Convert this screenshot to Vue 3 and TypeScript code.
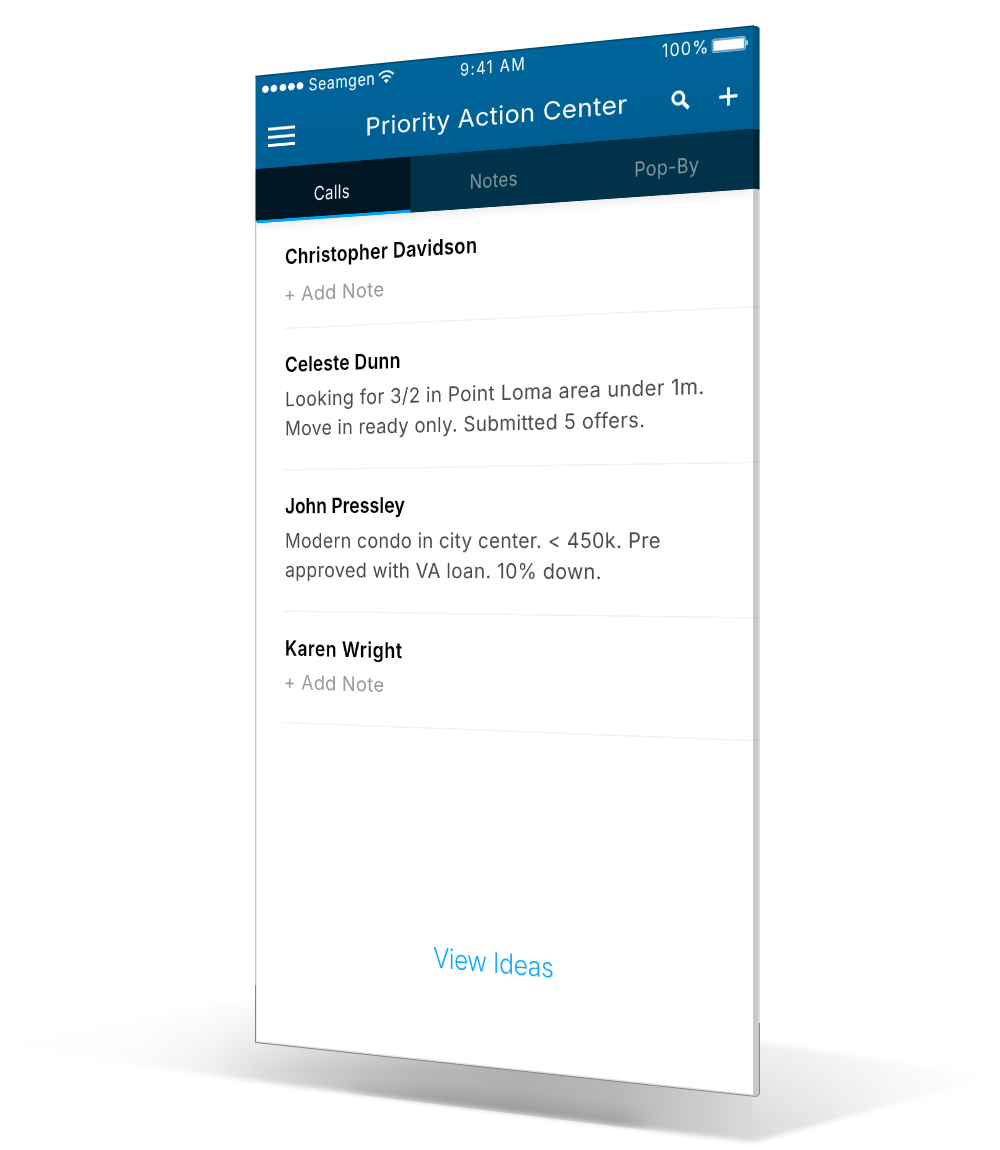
<script setup lang="ts">
interface Contact {
  name: string
  nameWidth: number
  lines: { text: string; width: number }[]
  height: number
  top: number
  gap: number
  empty?: boolean
}

const tabs = [
  { label: 'Calls', width: 57, shift: 0, active: true },
  { label: 'Notes', width: 72, shift: 5, active: false },
  { label: 'Pop-By', width: 91, shift: 8, active: false },
]

const contacts: Contact[] = [
  { name: 'Christopher Davidson', nameWidth: 303, lines: [{ text: '+ Add Note', width: 161 }], height: 148.5, top: 34.5, gap: 16, empty: true },
  {
    name: 'Celeste Dunn', nameWidth: 184, height: 194, top: 34, gap: 12,
    lines: [
      { text: 'Looking for 3/2 in Point Loma area under 1m.', width: 632 },
      { text: 'Move in ready only. Submitted 5 offers.', width: 549 },
    ],
  },
  {
    name: 'John Pressley', nameWidth: 191, height: 194, top: 34, gap: 11.5,
    lines: [
      { text: 'Modern condo in city center. < 450k. Pre', width: 571 },
      { text: 'approved with VA loan. 10% down.', width: 487 },
    ],
  },
  { name: 'Karen Wright', nameWidth: 187, lines: [{ text: '+ Add Note', width: 161 }], height: 153, top: 34.5, gap: 11.5, empty: true },
]

// Makes a line of text span the given width: by tracking alone, or, with .wide, by widening its letters.
const vFit = {
  mounted(el: HTMLElement, binding: { value: number; modifiers: { wide?: boolean } }) {
    const count = (el.textContent ?? '').trim().length
    if (binding.modifiers.wide) {
      el.style.letterSpacing = '0.5px'
      el.style.transform = `scaleX(${((binding.value + 1) / el.offsetWidth).toFixed(4)})`
      return
    }
    el.style.letterSpacing = `${((binding.value + 1 - el.offsetWidth) / (count - 1)).toFixed(3)}px`
  },
}
</script>

<template>
  <main class="stage">
    <svg class="floor" viewBox="0 0 1000 1150" width="1000" height="1150" aria-hidden="true">
      <defs>
        <linearGradient id="shade" gradientUnits="userSpaceOnUse" x1="0" y1="0" x2="1000" y2="0">
          <stop offset="0" stop-color="#000" stop-opacity="0" />
          <stop offset=".14" stop-color="#000" stop-opacity=".02" />
          <stop offset=".21" stop-color="#000" stop-opacity=".06" />
          <stop offset=".26" stop-color="#000" stop-opacity=".13" />
          <stop offset=".32" stop-color="#000" stop-opacity=".2" />
          <stop offset=".42" stop-color="#000" stop-opacity=".28" />
          <stop offset=".52" stop-color="#000" stop-opacity=".31" />
          <stop offset=".62" stop-color="#000" stop-opacity=".28" />
          <stop offset=".7" stop-color="#000" stop-opacity=".2" />
          <stop offset=".76" stop-color="#000" stop-opacity=".14" />
          <stop offset=".82" stop-color="#000" stop-opacity=".1" />
          <stop offset=".9" stop-color="#000" stop-opacity=".04" />
          <stop offset="1" stop-color="#000" stop-opacity="0" />
        </linearGradient>
        <linearGradient id="fade" gradientUnits="userSpaceOnUse" x1="0" y1="995" x2="0" y2="1070">
          <stop offset="0" stop-color="#fff" stop-opacity="0" />
          <stop offset="1" stop-color="#fff" />
        </linearGradient>
        <linearGradient id="fade-right" gradientUnits="userSpaceOnUse" x1="0" y1="1030" x2="0" y2="1125">
          <stop offset="0" stop-color="#fff" stop-opacity=".3" />
          <stop offset="1" stop-color="#fff" />
        </linearGradient>
        <filter id="soft" x="-5%" y="-20%" width="110%" height="140%"><feGaussianBlur stdDeviation="2.5" /></filter>
        <filter id="wide" x="-20%" y="-100%" width="140%" height="300%"><feGaussianBlur stdDeviation="11" /></filter>
        <mask id="depth">
          <rect width="752" height="1150" fill="url(#fade)" />
          <rect x="752" width="248" height="1150" fill="url(#fade-right)" />
        </mask>
        <clipPath id="ground"><path d="M5 1045L255 990L755 1038L995 1077L754 1143L500 1112L255 1082Z" /></clipPath>
      </defs>
      <g mask="url(#depth)">
        <path d="M5 1045L255 995L755 1041L995 1077L754 1142L500 1111L255 1081L120 1062Z" fill="url(#shade)" filter="url(#soft)" />
      </g>
      <g clip-path="url(#ground)">
        <path d="M350 1092L450 1098L640 1122L640 1136L500 1119L350 1102Z" fill="#000" fill-opacity=".22" filter="url(#wide)" />
      </g>
    </svg>

    <section class="screen">
      <header class="header">
        <div class="status">
          <div class="carrier">
            <i v-for="n in 5" :key="n" class="dot"></i>
            <span v-fit="105" class="label carrier-name">Seamgen</span>
            <svg class="wifi" viewBox="0 0 26 18" width="26" height="18">
              <path d="M1.500 6.500C8 .2 18 .2 24.500 6.500M6 10.800C10 7 16 7 20 10.800" fill="none" stroke="#fff" stroke-width="2.600" />
              <path d="M9 13.700Q13 10.600 17 13.700L13 17.800Z" fill="#fff" />
            </svg>
          </div>
          <span v-fit="97" class="label">9:41 AM</span>
          <div class="power">
            <span v-fit="64" class="label percent">100%</span>
            <svg class="battery" viewBox="0 0 50 18" width="50" height="18">
              <rect x=".8" y=".8" width="45.400" height="16.400" rx="2.500" fill="none" stroke="#b9d3e2" stroke-width="1.200" />
              <rect x="2.400" y="2.400" width="42.200" height="13.200" rx="1" fill="#fff" />
              <path d="M47.500 6H49.500V12H47.500Z" fill="#fff" />
            </svg>
          </div>
        </div>
        <div class="bar">
          <svg class="menu" viewBox="0 0 44 28" width="44" height="28">
            <path d="M0 2.500H44M0 13.700H44M0 25H44" stroke="#fff" stroke-width="4" />
          </svg>
          <h1 class="title"><span v-fit.wide="394">Priority Action Center</span></h1>
          <svg class="search" viewBox="0 0 26 25" width="26" height="25">
            <circle cx="9.800" cy="9.500" r="7.700" fill="none" stroke="#fff" stroke-width="4" />
            <path d="M15.500 15L24 23.200" stroke="#fff" stroke-width="5" />
          </svg>
          <svg class="plus" viewBox="0 0 26 24" width="26" height="24">
            <path d="M13 .5V23.500M.5 12H25.500" stroke="#fff" stroke-width="4" />
          </svg>
        </div>
      </header>

      <nav class="tabs">
        <a
          v-for="tab in tabs"
          :key="tab.label"
          class="tab"
          :class="{ active: tab.active }"
          :style="{ paddingLeft: tab.shift + 'px' }"
        >
          <span v-fit.wide="tab.width">{{ tab.label }}</span>
        </a>
      </nav>

      <ul class="list">
        <li
          v-for="contact in contacts"
          :key="contact.name"
          class="contact"
          :class="{ empty: contact.empty }"
          :style="{ height: contact.height + 'px', paddingTop: contact.top + 'px', gap: contact.gap + 'px' }"
        >
          <h2 class="name"><span v-fit="contact.nameWidth">{{ contact.name }}</span></h2>
          <p class="note">
            <span v-for="line in contact.lines" :key="line.text" v-fit.wide="line.width" class="line">{{ line.text }}</span>
          </p>
        </li>
      </ul>

      <footer class="footer"><a v-fit="181" class="ideas">View Ideas</a></footer>
    </section>

    <svg class="edges" viewBox="0 0 1000 1150" width="1000" height="1150" aria-hidden="true">
      <path d="M753 25.700L757 26.300L759.500 28V1094L756.500 1096.500H753Z" fill="#c9c9c9" />
      <path d="M753 25.700L757 26.300L759.500 28V131L753 128Z" fill="#00517e" />
      <path d="M753 128.300L759.500 130V189.500L753 188.500Z" fill="#002537" />
      <path d="M759 190V1023" stroke="#ddd" />
      <path d="M255.500 76.500L754 26" stroke="#004c74" stroke-width="1.400" />
      <path d="M256 1041.500L753.500 1095" stroke="#e2e2e2" stroke-width="1.600" />
      <path d="M759.500 1023V1094L756.500 1096.500L255.500 1042.500V985" fill="none" stroke="#858585" />
      <path d="M255.500 222V985" stroke="#c4c4c4" />
      <path d="M256.500 222V1041" stroke="#ececec" />
      <path d="M753.500 306.500L759.500 307M753.500 462H759.500M753.500 617.500H759.500M753.500 740L759.500 740.500" stroke="#bcc1c1" />
    </svg>
  </main>
</template>

<style>
body {
  margin: 0;
  background: #fff;
}
</style>

<style scoped>
.stage {
  position: relative;
  width: 1000px;
  height: 1150px;
  overflow: hidden;
  font-family: Inter, "Liberation Sans", sans-serif;
}

.floor,
.edges {
  position: absolute;
  top: 0;
  left: 0;
}

.screen {
  position: absolute;
  top: 0;
  left: 0;
  display: flex;
  flex-direction: column;
  width: 750px;
  height: 1334px;
  box-sizing: border-box;
  background: #fff;
  transform-origin: 0 0;
  transform: matrix3d(0.566482, -0.070719, 0, -0.000130218, 0, 0.723763, 0, 0, 0, 0, 1, 0, 255.5, 76.5, 0, 1);
}

.header {
  display: flex;
  flex-direction: column;
  height: 128px;
  box-sizing: border-box;
  background: linear-gradient(#00659b, #005f94);
  border-top: 1.500px solid #004c74;
  color: #fff;
}

.status {
  display: flex;
  justify-content: space-between;
  height: 36px;
  padding: 0 8px 0 11px;
  font-size: 22.500px;
  line-height: 36px;
}

.carrier,
.power {
  display: flex;
  align-items: center;
  width: 300px;
}

.label,
.title span,
.tab span,
.name span,
.line,
.ideas {
  display: inline-block;
  white-space: pre;
}

.title span,
.line {
  transform-origin: 0 50%;
}

.dot {
  width: 11px;
  height: 10.500px;
  margin-right: 3.300px;
  border-radius: 50%;
  background: #fff;
}

.carrier-name {
  margin: 0 4px 0 5px;
}

.wifi {
  margin-top: -2px;
}

.power {
  justify-content: flex-end;
  gap: 3px;
}

.percent {
  margin-top: 2px;
}

.battery {
  margin-top: 1px;
}

.bar {
  display: flex;
  align-items: center;
  height: 90px;
  padding: 0 22px 0 21px;
}

.menu {
  margin-top: 7px;
}

.title {
  width: 392px;
  margin: 2px 65px 0 114px;
  font-size: 33px;
  font-weight: 375;
  line-height: 40px;
}

.search {
  flex: none;
  margin-top: 4px;
}

.plus {
  flex: none;
  margin: 6px 0 0 40px;
}

.tabs {
  position: relative;
  z-index: 1;
  display: flex;
  height: 74.500px;
  flex: none;
  background: #003249;
  box-shadow: 0 3px 14px rgba(0, 0, 0, 0.1);
}

.tab {
  flex: 0 0 250px;
  box-sizing: border-box;
  padding-top: 23px;
  color: #83989f;
  font-size: 26px;
  font-weight: 400;
  line-height: 34px;
  text-align: center;
}

.tab.active {
  border-bottom: 4px solid #00a3fa;
  background: #001723;
  color: #fff;
}

.list {
  margin: 0;
  padding: 0 0 0 47px;
  list-style: none;
}

.contact {
  display: flex;
  flex-direction: column;
  box-sizing: border-box;
  border-bottom: 2px solid #f1f4f4;
}

.name {
  margin: 0 0 0 2px;
  color: #000;
  font-size: 28px;
  font-weight: 600;
  line-height: 30px;
}

.note {
  display: flex;
  flex-direction: column;
  align-items: flex-start;
  margin: 0 0 0 2px;
  color: #4a4a4a;
  font-size: 27.500px;
  font-weight: 400;
  line-height: 40px;
}

.empty .note {
  margin-left: 0;
  color: #9a9a9a;
}

.footer {
  display: flex;
  flex: 1;
  align-items: flex-end;
  justify-content: center;
  padding: 0 0 110px 2px;
}

.ideas {
  color: #10aaf8;
  font-size: 37px;
  font-weight: 300;
  line-height: 56px;
}
</style>
